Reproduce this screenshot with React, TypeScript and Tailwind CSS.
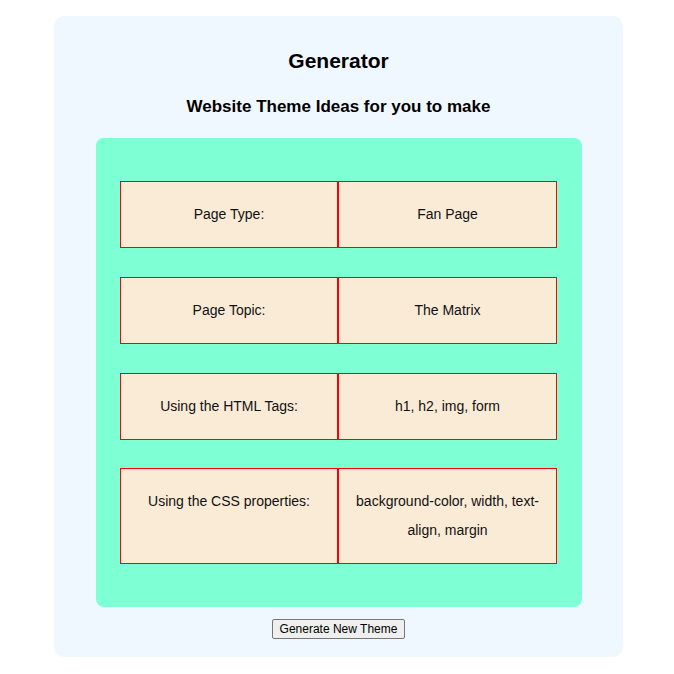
import React from "react";

const rows: [string, string][] = [
  ["Page Type:", "Fan Page"],
  ["Page Topic:", "The Matrix"],
  ["Using the HTML Tags:", "h1, h2, img, form"],
  ["Using the CSS properties:", "background-color, width, text-align, margin"],
];

const gaps = ["mt-0", "mt-[29px]", "mt-[29px]", "mt-[28px]"];

export default function App() {
  return (
    <div className="w-[674px] h-[674px] bg-white pt-[16px]" style={{ fontFamily: '"Liberation Sans", Arial, sans-serif' }}>
      <div className="ml-[54px] w-[569px] h-[641px] bg-[#f0f8ff] rounded-[10px] flex flex-col items-center pt-[33px]">
        <h1 className="text-[21px] leading-[24px] font-bold text-black">Generator</h1>
        <h2 className="mt-[24px] text-[17px] leading-[20px] font-bold text-black">Website Theme Ideas for you to make</h2>
        <div className="mt-[21px] self-start ml-[42px] w-[486px] bg-[#7fffd4] rounded-[8px] pt-[43px] pb-[43px] pl-[24px] flex flex-col">
          {rows.map(([a, b], i) => (
            <div key={i} className={`${gaps[i]} flex w-[437px] text-[14px] leading-[29px] text-[#111]`}>
              <div className="w-[218px] border border-[#ff0000] bg-[#faebd7] px-[14px] py-[18px] text-center">{a}</div>
              <div className="w-[219px] border border-[#ff0000] bg-[#faebd7] px-[14px] py-[18px] text-center">{b}</div>
            </div>
          ))}
        </div>
        <button className="mt-[12px] h-[20px] w-[133px] bg-[#efefef] border border-[#767676] rounded-[2px] text-[12px] leading-[16px] text-black">
          Generate New Theme
        </button>
      </div>
    </div>
  );
}
